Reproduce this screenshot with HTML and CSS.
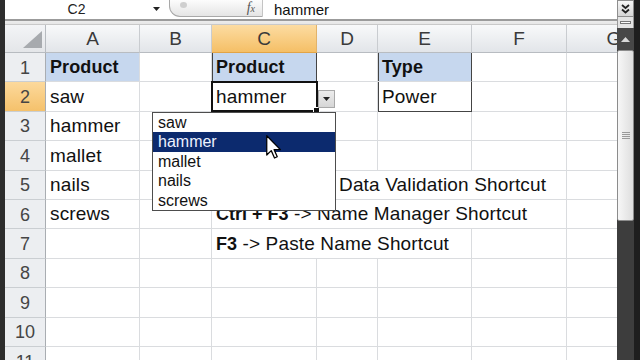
FILE: index.html
```html
<!DOCTYPE html>
<html>
<head>
<meta charset="utf-8">
<link rel="stylesheet" href="styles.css">
</head>
<body>
<div class="app">
  <div class="edge-left"></div>
  <div class="main">
    <div class="fbar">
      <div class="namebox">C2</div>
      <div class="nb-arrow"><svg width="7" height="4" viewBox="0 0 7 4"><path d="M0 0H7L3.5 4Z" fill="#222"/></svg></div>
      <div class="pill"><span class="dot"></span><span class="fx">f<span class="x">x</span></span></div>
      <div class="formula">hammer</div>
    </div>
    <div class="band"></div>
    <div class="sheet">
      <div class="corner"><svg width="41" height="28" viewBox="0 0 41 28"><polygon points="18,23 37,23 37,6" fill="#a7aaae"/></svg></div>
      <div class="ch">A</div><div class="ch">B</div><div class="ch sel">C</div><div class="ch">D</div><div class="ch">E</div><div class="ch">F</div><div class="ch">G</div>

      <div class="rh">1</div>
      <div class="c fill b">Product</div><div class="c"></div><div class="c fill b tb">Product</div><div class="c"></div><div class="c fill b tb">Type</div><div class="c"></div><div class="c"></div>

      <div class="rh sel">2</div>
      <div class="c">saw</div><div class="c"></div><div class="c tb">hammer</div><div class="c"></div><div class="c tb tb-last">Power</div><div class="c"></div><div class="c"></div>

      <div class="rh">3</div>
      <div class="c">hammer</div><div class="c"></div><div class="c"></div><div class="c"></div><div class="c"></div><div class="c"></div><div class="c"></div>

      <div class="rh">4</div>
      <div class="c">mallet</div><div class="c"></div><div class="c"></div><div class="c"></div><div class="c"></div><div class="c"></div><div class="c"></div>

      <div class="rh">5</div>
      <div class="c">nails</div><div class="c"></div><div class="c span4"><b>Alt + D + L</b>&nbsp;-&gt;&nbsp; Data Validation Shortcut</div><div class="c"></div>

      <div class="rh">6</div>
      <div class="c">screws</div><div class="c"></div><div class="c span4"><b>Ctrl + F3</b>&nbsp;-&gt; Name Manager Shortcut</div><div class="c"></div>

      <div class="rh">7</div>
      <div class="c"></div><div class="c"></div><div class="c span3"><b>F3</b>&nbsp;-&gt; Paste Name Shortcut</div><div class="c"></div><div class="c"></div>

      <div class="rh">8</div>
      <div class="c"></div><div class="c"></div><div class="c"></div><div class="c"></div><div class="c"></div><div class="c"></div><div class="c"></div>
      <div class="rh">9</div>
      <div class="c"></div><div class="c"></div><div class="c"></div><div class="c"></div><div class="c"></div><div class="c"></div><div class="c"></div>
      <div class="rh">10</div>
      <div class="c"></div><div class="c"></div><div class="c"></div><div class="c"></div><div class="c"></div><div class="c"></div><div class="c"></div>
      <div class="rh">11</div>
      <div class="c"></div><div class="c"></div><div class="c"></div><div class="c"></div><div class="c"></div><div class="c"></div><div class="c"></div>

      <div class="active"></div>
      <div class="dd-btn"><svg width="7" height="4" viewBox="0 0 7 4"><path d="M0 0H7L3.5 4Z" fill="#222"/></svg></div>
      <ul class="dd-list">
        <li>saw</li>
        <li class="hi">hammer</li>
        <li>mallet</li>
        <li>nails</li>
        <li>screws</li>
      </ul>
      <svg class="cursor" width="16" height="25" viewBox="0 0 12.8 20"><path d="M0.6 0.6 L0.6 16 L4.2 12.5 L6.8 18.4 L9 17.4 L6.5 11.7 L11.5 11.7 Z" fill="#fff" stroke="#000" stroke-width="1" stroke-linejoin="round"/></svg>
    </div>
  </div>
  <div class="vscroll">
    <div class="expand"><svg width="9" height="10" viewBox="0 0 9 10"><path d="M1 1 L4.5 4 L8 1 M1 5.5 L4.5 8.5 L8 5.5" fill="none" stroke="#222" stroke-width="1.8"/></svg></div>
    <div class="split"><span></span></div>
    <div class="up"><svg width="9" height="5" viewBox="0 0 9 5"><path d="M0 5H9L4.5 0Z" fill="#d8d8d8"/></svg></div>
    <div class="thumb"><span class="grip"></span></div>
    <div class="track"></div>
  </div>
  <div class="edge-right"></div>
</div>
</body>
</html>
```
FILE: styles.css
```css
* { box-sizing: border-box; }
body { margin: 0; background: #2b2b2b; font-family: "Liberation Sans", Arial, sans-serif; }
.app { width: 640px; height: 360px; display: flex; overflow: hidden; }
.edge-left { width: 5px; flex: none; background: #2d2d2d; }
.main { width: 612px; flex: none; display: flex; flex-direction: column; overflow: hidden; background: #fff; }
.vscroll { width: 17px; flex: none; display: flex; flex-direction: column; background: #3b3b3b; }
.edge-right { flex: 1; background: #1e1e1e; }

/* formula bar */
.fbar { height: 18px; flex: none; display: flex; align-items: center; background: #fff; }
.namebox { width: 143px; text-align: center; font-size: 14px; color: #222; }
.nb-arrow { width: 21px; display: flex; align-items: center; padding-left: 5px; }
.pill { width: 94px; height: 17px; align-self: flex-start; border: 1px solid #a8a8a8; border-right-color: #c4c4c4; border-top: none; border-radius: 0 0 0 11px; background: linear-gradient(#fcfcfc, #e4e4e4); display: flex; align-items: center; justify-content: flex-end; padding: 0 7px 0 0; position: relative; }
.pill .dot { position: absolute; left: 10px; top: 2px; width: 7px; height: 6px; border-radius: 50%; background: #cfcfcf; }
.fx { font-family: "Liberation Serif", serif; font-style: italic; font-size: 14px; line-height: 15px; color: #555; }
.fx .x { font-size: 10px; }
.formula { padding-left: 11px; font-size: 15px; color: #111; }
.band { height: 7px; flex: none; background: linear-gradient(#fff 0, #fff 1px, #9b9b9b 1px, #9b9b9b 3px, #ececec 3px, #e6e6e6 6px, #c9c9c9 6px); }

/* sheet */
.sheet { position: relative; display: grid; width: 657px; grid-template-columns: 41px 94px 72px 105px 61px 94px 95px 95px; grid-template-rows: 28px repeat(11, 29.4px); background: #fff; }
.corner { background: linear-gradient(#f3f4f6, #e4e6e9); border-right: 1px solid #b7bbc0; border-bottom: 1px solid #b7bbc0; }
.corner svg { display: block; }
.ch { background: linear-gradient(#f8f9fa, #e2e5e9); border-right: 1px solid #c9ccd0; border-bottom: 1px solid #b8bcc1; display: flex; align-items: center; justify-content: center; font-size: 19px; color: #3a3a3a; }
.ch.sel { background: linear-gradient(#fcdca2, #f5bf66); border-bottom-color: #e2a446; border-right-color: #e2b36a; }
.rh { background: #eceef1; border-right: 1px solid #a9adb2; border-bottom: 1px solid #caced2; display: flex; align-items: center; justify-content: center; font-size: 18px; color: #454545; padding-top: 2px; }
.rh.sel { background: linear-gradient(#fcd99c, #f5c16b); }
.c { border-right: 1px solid #dadcdf; border-bottom: 1px solid #dadcdf; font-size: 19px; letter-spacing: 0.15px; color: #111; display: flex; align-items: flex-end; padding: 0 0 3px 4px; line-height: 22px; white-space: nowrap; }
.c b { font-size: 18px; letter-spacing: 0; }
.b { font-weight: bold; font-size: 18px; letter-spacing: 0.1px; }
.fill { background: #c6d7ee; }
.tb { border-right-color: #444; box-shadow: inset 1px 0 0 #444; }
.tb-last { border-bottom-color: #444; }
.span4 { grid-column: span 4; }
.span3 { grid-column: span 3; }

/* overlays */
.active { position: absolute; left: 206px; top: 56px; width: 107px; height: 31px; border: 2px solid #111; }
.active::after { content: ""; position: absolute; right: -4px; bottom: -4px; width: 5px; height: 5px; background: #111; border: 1px solid #fff; }
.dd-btn { position: absolute; left: 313px; top: 65px; width: 17px; height: 18px; background: linear-gradient(#ececec, #d6d6d6); border: 1px solid #a9a9a9; display: flex; align-items: center; justify-content: center; }
.dd-list { position: absolute; left: 147px; top: 87px; width: 184px; height: 99px; margin: 0; padding: 0; list-style: none; background: #fff; border: 1px solid #4d4d4d; font-family: "Liberation Sans", Arial, sans-serif; font-size: 16px; color: #111; }
.dd-list li { height: 19.4px; line-height: 19.4px; padding-left: 5px; }
.dd-list li.hi { background: #0c2a6e; color: #eef2ff; }
.cursor { position: absolute; left: 261px; top: 110px; }

/* scrollbar */
.expand { height: 17px; flex: none; background: linear-gradient(#f6f6f6, #d6d6d6); border: 1px solid #8e8e8e; display: flex; align-items: center; justify-content: center; }
.split { height: 11px; flex: none; background: #e4e4e4; display: flex; align-items: center; justify-content: center; border-left: 1px solid #999; border-right: 1px solid #999; }
.split span { width: 11px; height: 3px; border: 1px solid #777; background: #fafafa; }
.up { height: 22px; flex: none; background: #474747; display: flex; align-items: center; justify-content: center; }
.thumb { height: 171px; flex: none; background: linear-gradient(to right, #f7f7f7, #dedede); border: 1px solid #8c8c8c; border-radius: 2px; display: flex; align-items: center; justify-content: center; }
.grip { width: 8px; height: 8px; background: repeating-linear-gradient(#9a9a9a 0, #9a9a9a 1px, transparent 1px, transparent 2px); }
.track { flex: 1; background: #3d3d3d; }
```
